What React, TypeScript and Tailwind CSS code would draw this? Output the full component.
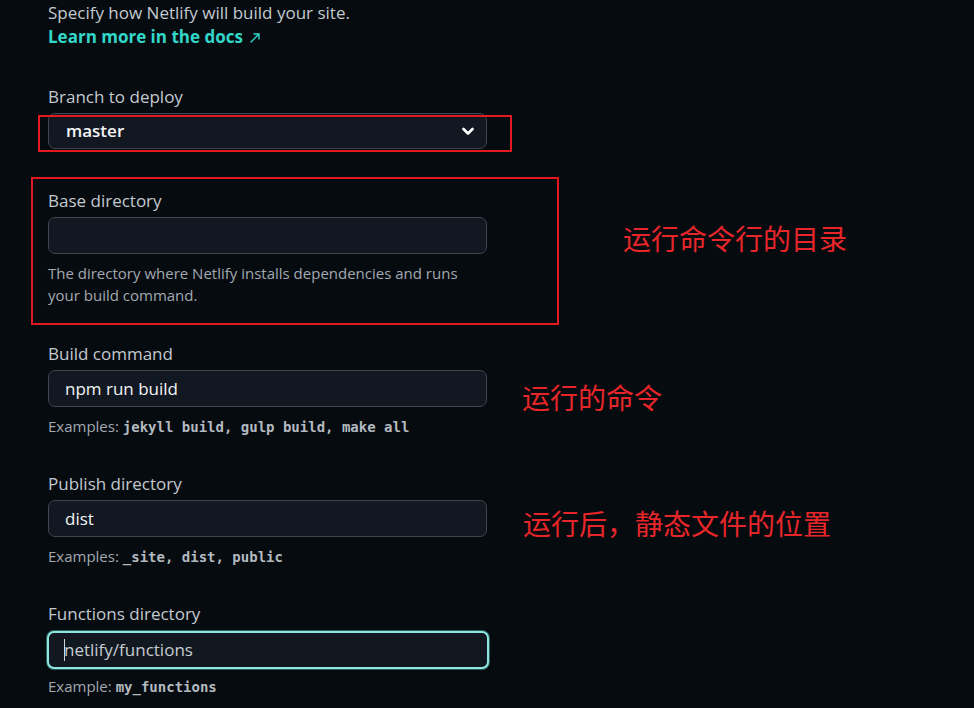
import React from "react";

const sans = "font-['Segoe_UI','Open_Sans','Noto_Sans',sans-serif]";
const mono = "font-['DejaVu_Sans_Mono','Liberation_Mono',monospace]";

function Label({ children, className = "" }: { children: React.ReactNode; className?: string }) {
  return <div className={`text-[17px] leading-6 text-[#c3c9cf] ${className}`}>{children}</div>;
}

function Field({ value, focused = false }: { value?: string; focused?: boolean }) {
  if (focused) {
    return (
      <div className="mt-[5px] -ml-px w-[442px] h-[38px] rounded-[7px] border-2 border-[#8fe6df] bg-[#111820] flex items-center pl-[15px] shadow-[0_0_0_1px_#2a5d5a]">
        <span className="w-px h-[22px] bg-[#d0d6dc] mr-[-1px]" />
        <span className="text-[17px] text-[#c6ccd2]">netlify/functions</span>
      </div>
    );
  }
  return (
    <div className="mt-1 w-[439px] h-[37px] rounded-[7px] border border-[#40464f] bg-[#121821] flex items-center pl-[16px]">
      {value && <span className="text-[17px] font-medium text-[#f2f4f6]">{value}</span>}
    </div>
  );
}

function Hint({ prefix, code, className = "" }: { prefix: string; code: string; className?: string }) {
  return (
    <div className={`text-[15px] leading-5 text-[#a2a9b0] ${className}`}>
      {prefix} <span className={`${mono} text-[14px] font-bold text-[#b3bac0]`}>{code}</span>
    </div>
  );
}

export default function App() {
  return (
    <div className={`relative w-[974px] h-[708px] overflow-hidden bg-[#060b10] ${sans}`}>
      <div className="pl-[48px] pt-[1px]">
        <div className="text-[17px] leading-6 text-[#c3c9cf]">Specify how Netlify will build your site.</div>
        <div className="text-[17px] leading-6 font-bold text-[#32d7c9] flex items-center gap-[6px]">
          Learn more in the docs
          <svg width="12" height="12" viewBox="0 0 12 12" className="mt-[1px]">
            <path d="M2 10 L10 2 M5 2 H10 V7" stroke="#32d7c9" strokeWidth="1.4" fill="none" strokeLinecap="round" />
          </svg>
        </div>

        <Label className="mt-[36px]">Branch to deploy</Label>
        <div className="mt-1 w-[439px] h-[36px] rounded-[7px] border border-[#40464f] bg-[#121821] flex items-center justify-between pl-[17px] pr-[12px]">
          <span className="text-[17px] font-semibold text-[#f2f4f6]">master</span>
          <svg width="12" height="9" viewBox="0 0 12 9">
            <path d="M1.5 2 L6 6.5 L10.5 2" stroke="#ffffff" strokeWidth="2.6" fill="none" strokeLinecap="round" strokeLinejoin="round" />
          </svg>
        </div>

        <Label className="mt-[40px]">Base directory</Label>
        <Field />
        <div className="mt-[8px] w-[420px] text-[15px] leading-[22px] text-[#a2a9b0]">
          The directory where Netlify installs dependencies and runs your build command.
        </div>

        <Label className="mt-[36px]">Build command</Label>
        <Field value="npm run build" />
        <Hint className="mt-[9px]" prefix="Examples:" code="jekyll build, gulp build, make all" />

        <Label className="mt-[35px]">Publish directory</Label>
        <Field value="dist" />
        <Hint className="mt-[9px]" prefix="Examples:" code="_site, dist, public" />

        <Label className="mt-[35px]">Functions directory</Label>
        <Field focused />
        <Hint className="mt-[7px]" prefix="Example:" code="my_functions" />
      </div>

      {/* annotation boxes */}
      <div className="absolute left-[38px] top-[115px] w-[474px] h-[37px] border-2 border-[#e3191f]" />
      <div className="absolute left-[31px] top-[177px] w-[528px] h-[148px] border-2 border-[#e3191f]" />

      {/* annotation notes */}
      <div className="absolute left-[623px] top-[221px] text-[28px] leading-[34px] text-[#e8262a] font-['Noto_Sans_CJK_SC',sans-serif]">
        运行命令行的目录
      </div>
      <div className="absolute left-[522px] top-[380px] text-[28px] leading-[34px] text-[#e8262a] font-['Noto_Sans_CJK_SC',sans-serif]">
        运行的命令
      </div>
      <div className="absolute left-[523px] top-[506px] text-[28px] leading-[34px] text-[#e8262a] font-['Noto_Sans_CJK_SC',sans-serif]">
        运行后，静态文件的位置
      </div>
    </div>
  );
}
